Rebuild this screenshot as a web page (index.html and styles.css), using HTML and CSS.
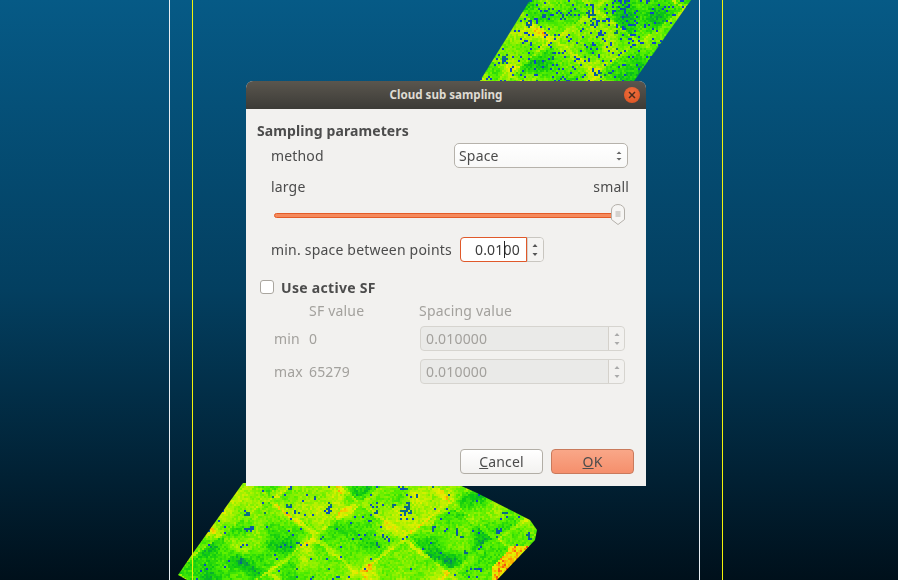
FILE: index.html
```html
<!DOCTYPE html>
<html lang="en">
<head>
<meta charset="utf-8">
<title>Cloud sub sampling</title>
<link rel="stylesheet" href="styles.css">
</head>
<body>
<div class="viewport">
  <canvas id="cloud" class="cloud" width="898" height="580"></canvas>
  <span class="vline white l1"></span>
  <span class="vline yellow l2"></span>
  <span class="vline white l3"></span>
  <span class="vline yellow l4"></span>

  <section class="dialog">
    <header class="titlebar">
      <h1 class="title">Cloud sub sampling</h1>
      <span class="close">
        <svg width="10" height="10" viewBox="0 0 10 10"><path d="M2 2l6 6M8 2l-6 6" stroke="#4a2c1c" stroke-width="1.500" fill="none"/></svg>
      </span>
    </header>
    <div class="body">
      <h2 class="group">Sampling parameters</h2>
      <div class="row method">
        <span>method</span>
        <div class="combo"><span>Space</span>
          <svg class="updown" width="8" height="14" viewBox="0 0 8 14"><path d="M4 2.500l2.500 2.500h-5z M4 11.500L1.500 9h5z" fill="#666"/></svg>
        </div>
      </div>
      <div class="row ends"><span>large</span><span>small</span></div>
      <div class="slider">
        <div class="track"></div>
        <svg class="thumb" width="16" height="22" viewBox="0 0 16 22">
          <path d="M1.500 6a6.500 5.500 0 0 1 13 0v9.500L8 20.500 1.500 15.500z" fill="#f6f5f3" stroke="#b3afa9"/>
          <path d="M5.500 8h5M5.500 10h5M5.500 12h5" stroke="#b3afa9"/>
        </svg>
      </div>
      <div class="row space">
        <span>min. space between points</span>
        <div class="spin active">
          <div class="field"><span>0.01</span><i class="caret"></i><span>00</span></div>
          <div class="arrows">
            <svg width="8" height="20" viewBox="0 0 8 20"><path d="M4 4l2.500 3h-5z" fill="#555"/><path d="M4 16l-2.500-3h5z" fill="#555"/></svg>
          </div>
        </div>
      </div>
      <label class="check"><span class="box"></span><span>Use active SF</span></label>
      <div class="sfgrid">
        <span></span><span class="head">SF value</span><span class="head">Spacing value</span>
        <span>min</span><span>0</span>
        <div class="spin off"><div class="field">0.010000</div><div class="arrows"><svg width="8" height="20" viewBox="0 0 8 20"><path d="M4 4l2.500 3h-5z" fill="#aaa"/><path d="M4 16l-2.500-3h5z" fill="#aaa"/></svg></div></div>
        <span>max</span><span>65279</span>
        <div class="spin off"><div class="field">0.010000</div><div class="arrows"><svg width="8" height="20" viewBox="0 0 8 20"><path d="M4 4l2.500 3h-5z" fill="#aaa"/><path d="M4 16l-2.500-3h5z" fill="#aaa"/></svg></div></div>
      </div>
      <div class="buttons">
        <button class="btn"><u>C</u>ancel</button>
        <button class="btn ok"><u>O</u>K</button>
      </div>
    </div>
  </section>
</div>
<script src="cloud.js"></script>
</body>
</html>
```
FILE: styles.css
```css
* { box-sizing: border-box; }
html, body { margin: 0; height: 100%; }
body { overflow: hidden; font-family: "Noto Sans", sans-serif; font-size: 14px; color: #4c4c4c; letter-spacing: 0.17px; }
.viewport { position: relative; width: 898px; height: 580px; overflow: hidden;
  background: linear-gradient(#065a86 0, #033f60 290px, #00101b 580px); }
.cloud { position: absolute; left: 0; top: 0; }
.vline { position: absolute; top: 0; bottom: 0; width: 1px; }
.white { background: #e8eef2; }
.yellow { background: #f2f20a; }
.l1 { left: 169px; } .l2 { left: 192px; } .l3 { left: 699px; } .l4 { left: 722px; }

.dialog { position: absolute; left: 246px; top: 81px; width: 400px; height: 405px; background: #f2f1ef;
  border-radius: 7px 7px 0 0; display: flex; flex-direction: column; overflow: hidden; }
.titlebar { height: 28px; flex: none; display: flex; align-items: center; justify-content: center; position: relative;
  background: linear-gradient(#5a564e, #3c3b37); }
.title { margin: 0 0 1px; font-size: 11.6px; font-weight: 700; color: #dfdbd2; letter-spacing: 0; }
.close { position: absolute; left: 378px; top: 6px; width: 16px; height: 16px; border-radius: 50%;
  background: radial-gradient(circle at 50% 35%, #f0703f, #d9501f); display: flex; align-items: center; justify-content: center; }
.body { flex: 1; position: relative; padding: 13px 12px 0 11px; display: flex; flex-direction: column; }
.group { margin: 0; font-size: 14px; line-height: 18px; font-weight: 700; letter-spacing: 0.1px; }
.row { display: flex; align-items: center; padding-left: 14px; }
.method { justify-content: space-between; margin-top: 3px; height: 25px; padding-right: 6px; }
.combo { width: 174px; height: 25px; border: 1px solid #b6b2ab; border-radius: 5px; background: linear-gradient(#fff, #f8f8f7);
  display: flex; align-items: center; justify-content: space-between; padding: 0 4px; }
.ends { justify-content: space-between; margin-top: 8px; height: 20px; padding-right: 5px; }
.slider { position: relative; height: 22px; margin: 8px 8px 0 17px; display: flex; align-items: center; }
.track { width: 100%; height: 5px; border-radius: 3px; background: #f58a5c; border: 1px solid #e35c28; margin-right: 6px; }
.thumb { position: absolute; right: 0; top: 0; }
.space { margin-top: 11px; height: 25px; gap: 8px; letter-spacing: 0.2px; }
.spin { display: flex; height: 25px; border: 1px solid #c9c6c0; border-radius: 4px; background: #fff; }
.spin .field { flex: 1; display: flex; align-items: center; }
.spin .arrows { width: 16px; border-left: 1px solid #d4d1cb; background: #f5f4f2; display: flex; align-items: center; justify-content: center; border-radius: 0 4px 4px 0; }
.active { width: 84px; border-color: #c9c6c0; }
.active .field { justify-content: flex-end; padding-right: 6px; margin: -1px 0 -1px -1px; border: 1px solid #e0592a; border-radius: 4px 0 0 4px; background: #fff; color: #3c3c3c; }
.caret { width: 1px; height: 17px; background: #222; display: block; margin: 0 -1px 0 0; position: relative; }
.check { display: flex; align-items: center; gap: 7px; margin: 15px 0 0 3px; height: 20px; font-weight: 700; letter-spacing: 0.3px; }
.box { width: 14px; height: 14px; border: 1px solid #aaa69f; border-radius: 3px; background: #fff; }
.sfgrid { display: grid; grid-template-columns: 35px 110px 205px; grid-template-rows: 24px 33px 33px; margin: 1px 0 0 17px; color: #a3a19d; align-items: center; }
.head { height: 24px; line-height: 26px; letter-spacing: 0.2px; }
.off { width: 205px; margin-left: 1px; background: #eaeae8; border-color: #d6d4cf; height: 25px; }
.off .field { padding-left: 5px; }
.off .arrows { background: #f2f1ef; }
.buttons { position: absolute; right: 12px; top: 340px; display: flex; gap: 8px; }
.btn { width: 83px; height: 25px; padding: 0; border: 1px solid #b2aea6; border-radius: 4px; font: inherit; letter-spacing: inherit; color: #4c4c4c;
  background: linear-gradient(#fff, #f3f2f0); }
.ok { background: linear-gradient(#f9a788, #f58f6c); border-color: #c97a5c; }
```
FILE: cloud.js
```js
// Draws the coloured point cloud: seeded noise over a grid of field parcels.
(function () {
  var c = document.getElementById('cloud').getContext('2d');
  var seed = 23;
  function rnd() { seed = (seed * 16807) % 2147483647; return seed / 2147483647; }
  var G = 64, grid = [];
  for (var i = 0; i < G * G; i++) grid.push(rnd());
  function g(a, b) { return grid[(a & 63) + (b & 63) * G]; }
  function vn(x, y) {
    var xi = Math.floor(x), yi = Math.floor(y), fx = x - xi, fy = y - yi;
    fx = fx * fx * (3 - 2 * fx); fy = fy * fy * (3 - 2 * fy);
    return (g(xi, yi) * (1 - fx) + g(xi + 1, yi) * fx) * (1 - fy) + (g(xi, yi + 1) * (1 - fx) + g(xi + 1, yi + 1) * fx) * fy;
  }
  function ramp(t) {
    var stops = [[0, 15, 70, 205], [0.14, 10, 120, 110], [0.3, 10, 200, 20], [0.48, 80, 238, 0], [0.66, 165, 242, 0], [0.82, 235, 238, 0], [0.94, 250, 170, 0], [1, 240, 80, 20]];
    t = Math.max(0, Math.min(1, t));
    for (var i = 1; i < stops.length; i++) if (t <= stops[i][0]) {
      var a = stops[i - 1], b = stops[i], f = (t - a[0]) / (b[0] - a[0]);
      return [a[1] + (b[1] - a[1]) * f, a[2] + (b[2] - a[2]) * f, a[3] + (b[3] - a[3]) * f];
    }
    return [240, 80, 20];
  }
  function fill(points, speck, cell, edge) {
    c.save();
    c.beginPath();
    points.forEach(function (p, i) { i ? c.lineTo(p[0], p[1]) : c.moveTo(p[0], p[1]); });
    c.closePath();
    c.clip();
    for (var y = 0; y < 580; y += 2) for (var x = 0; x < 898; x += 2) {
      var a = (x * 0.6 + y * 0.8) / cell, b = (-x * 0.62 + y * 0.78) / cell;
      var ca = Math.floor(a), cb = Math.floor(b);
      var da = Math.min(a - ca, ca + 1 - a), db = Math.min(b - cb, cb + 1 - b);
      var t = 0.38 + g(ca + 9, cb + 9) * 0.24;
      var wob = (vn(x / 10 + 5, y / 10) - 0.5) * 0.1;
      if (Math.min(da, db) + wob < 0.05) t += 0.14 * g(ca + 3, cb + 1) + 0.03;
      t += (vn(x / 16, y / 16) - 0.5) * 0.36 + (rnd() - 0.5) * 0.17;
      var blob = vn(x / 8 + 20, y / 8 + 40);
      if (blob < 0.13 && rnd() < 0.55) t = 0.02 + rnd() * 0.14;
      if (rnd() < speck) t = 0.01;
      if (edge && edge(x, y)) t = 0.76 + rnd() * 0.24;
      var k = ramp(t);
      c.fillStyle = 'rgb(' + (k[0] | 0) + ',' + (k[1] | 0) + ',' + (k[2] | 0) + ')';
      c.fillRect(x, y, 2, 2);
    }
    c.restore();
  }
  fill([[530, 0], [691, 0], [632, 84], [478, 84]], 0.09, 52);
  fill([[243, 483], [457, 484], [477, 493], [530, 520], [537, 530], [535, 540], [497, 580], [187, 580], [178, 575], [193, 553]], 0.012, 56,
    function (x, y) { var d = (x - 497) + (y - 580) * 0.9; return d > -18 && y > 545 && x > 490; });
})();
```
